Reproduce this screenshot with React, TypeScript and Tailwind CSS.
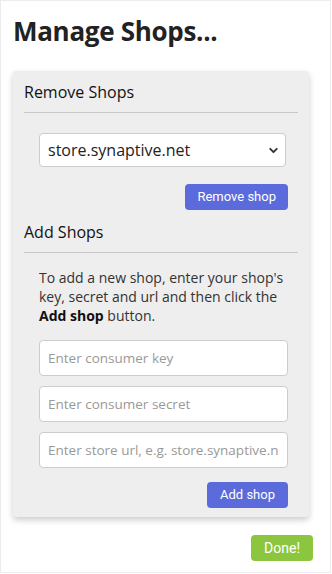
import { ChevronDown } from "lucide-react";

const inputCls =
  "w-full h-[36px] px-[8px] bg-white border border-[#cccccc] rounded-[4px] text-[13.5px] text-[#333] placeholder:text-[#999] focus:outline-none";

const btnFont = { fontFamily: "Roboto, Arial, sans-serif" };

const App = () => {
  return (
    <div
      className="w-[331px] h-[573px] border border-[#ececec] bg-white flex flex-col"
      style={{ fontFamily: '"Open Sans", sans-serif' }}
    >
      {/* Title */}
      <h1 className="pl-[12px] pt-[12px] text-[26px] leading-[36px] font-bold text-[#222] tracking-[-0.3px]">
        Manage Shops...
      </h1>

      {/* Card */}
      <div className="mt-[22px] ml-[12px] w-[296px] bg-[#eeeeee] rounded-[3px] shadow-[0_3px_6px_rgba(0,0,0,0.2)] px-[11px] pt-[10px] pb-[9px]">
        <h2 className="text-[16px] leading-[22px] text-[#111] pb-[9px] border-b border-[#c8c8c8]">
          Remove Shops
        </h2>

        <div className="pl-[15px] pr-[10px]">
          <div className="relative mt-[20px] mr-[2px]">
            <select className="appearance-none w-full h-[34px] pl-[8px] bg-white border border-[#cccccc] rounded-[4px] text-[16px] text-[#222] focus:outline-none">
              <option>store.synaptive.net</option>
            </select>
            <ChevronDown
              className="absolute right-[6px] top-[11px] w-[13px] h-[13px] text-[#333] pointer-events-none"
              strokeWidth={3.5}
            />
          </div>

          <div className="flex justify-end mt-[17px]">
            <button
              className="h-[26px] px-[12px] bg-[#5b6bdc] text-white text-[13px] rounded-[4px]"
              style={btnFont}
            >
              Remove shop
            </button>
          </div>
        </div>

        <h2 className="mt-[11px] text-[16px] leading-[22px] text-[#111] pb-[9px] border-b border-[#c8c8c8]">
          Add Shops
        </h2>

        <div className="pl-[15px] pr-[10px]">
          <p className="mt-[15px] text-[14px] leading-[19px] text-[#333]">
            To add a new shop, enter your shop's key, secret and url and then
            click the <b className="text-[#111]">Add shop</b> button.
          </p>

          <div className="mt-[15px] flex flex-col gap-[10px]">
            <input className={inputCls} placeholder="Enter consumer key" />
            <input className={inputCls} placeholder="Enter consumer secret" />
            <input
              className={inputCls}
              placeholder="Enter store url, e.g. store.synaptive.net"
            />
          </div>

          <div className="flex justify-end mt-[14px]">
            <button
              className="h-[26px] px-[13px] bg-[#5b6bdc] text-white text-[13px] rounded-[4px]"
              style={btnFont}
            >
              Add shop
            </button>
          </div>
        </div>
      </div>

      {/* Footer */}
      <div className="flex justify-end pr-[17px] mt-[18px]">
        <button
          className="h-[26px] px-[13px] bg-[#8cc63f] text-white text-[14px] rounded-[4px]"
          style={btnFont}
        >
          Done!
        </button>
      </div>
    </div>
  );
};

export default App;
